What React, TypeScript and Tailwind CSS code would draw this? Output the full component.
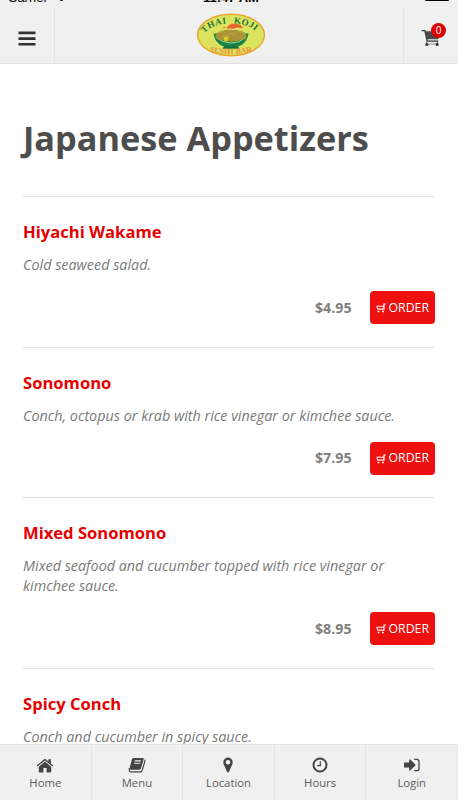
import type { ReactNode } from "react";

type Dish = {
  name: string;
  description: string;
  price: string;
};

const dishes: Dish[] = [
  { name: "Hiyachi Wakame", description: "Cold seaweed salad.", price: "$4.95" },
  {
    name: "Sonomono",
    description: "Conch, octopus or krab with rice vinegar or kimchee sauce.",
    price: "$7.95",
  },
  {
    name: "Mixed Sonomono",
    description:
      "Mixed seafood and cucumber topped with rice vinegar or kimchee sauce.",
    price: "$8.95",
  },
  {
    name: "Spicy Conch",
    description: "Conch and cucumber in spicy sauce.",
    price: "$8.95",
  },
];

function HomeIcon() {
  return (
    <svg viewBox="0 0 18 15" className="h-[15px] w-[18px]" fill="currentColor">
      <path d="M9 3.6 15.2 8.8V13.4Q15.2 14.4 14.2 14.4H10.6V10H7.4V14.4H3.8Q2.8 14.4 2.8 13.4V8.8Z" />
      <path d="M0.6 7.6 8.2 1.2Q9 .6 9.8 1.2L12.4 3.4V1.3H14.9V5.5L17.4 7.6 16.6 8.6 9 2.4 1.4 8.6Z" />
    </svg>
  );
}

function BookIcon() {
  return (
    <svg viewBox="0 0 18 16" className="h-[16px] w-[18px]">
      <path
        d="M5.6 1H14.8Q16 1 15.7 2.1L12.9 11.6Q12.6 12.7 11.5 12.7H3Q1.6 12.7 1.4 11.5L4 2.2Q4.4 1 5.6 1Z"
        fill="currentColor"
      />
      <path
        d="M6.7 3.9H12.9M6 6.3H12.2"
        stroke="#f0f0f0"
        strokeWidth="1.1"
        fill="none"
      />
      <path
        d="M1.4 11.2Q.8 14.9 3 14.9H12.4Q13.6 14.9 14 13.7L16.9 4.2Q17.1 3.4 16.4 3"
        stroke="currentColor"
        strokeWidth="1.2"
        fill="none"
      />
    </svg>
  );
}

function PinIcon() {
  return (
    <svg viewBox="0 0 10 16" className="h-[16px] w-[10px]">
      <path
        d="M5 .5A4.7 4.7 0 0 1 9.7 5.2Q9.7 6.5 9.2 7.5L6 14.7Q5 16.2 4 14.7L.8 7.5Q.3 6.5 .3 5.2A4.7 4.7 0 0 1 5 .5ZM5 2.9A2.3 2.3 0 1 0 5 7.5 2.3 2.3 0 1 0 5 2.9Z"
        fill="currentColor"
        fillRule="evenodd"
      />
    </svg>
  );
}

function ClockIcon() {
  return (
    <svg
      viewBox="0 0 16 16"
      className="size-4"
      fill="none"
      stroke="currentColor"
    >
      <circle cx="8" cy="8" r="6.5" strokeWidth="2" />
      <path d="M8.3 4.3V8.7H5.2" strokeWidth="1.2" />
    </svg>
  );
}

function LoginIcon() {
  return (
    <svg viewBox="0 0 16 14" className="h-[14px] w-[16px]">
      <path
        d="M.6 4.5H5.2V1.8Q5.4 .9 6.3 1.5L11.3 6.4Q11.8 7 11.3 7.6L6.3 12.5Q5.4 13.1 5.2 12.2V9.5H.6Q0 9.5 0 8.9V5.1Q0 4.5 .6 4.5Z"
        fill="currentColor"
      />
      <path
        d="M10.2 1.4H12.8Q15 1.4 15 3.6V10.4Q15 12.6 12.8 12.6H10.2"
        stroke="currentColor"
        strokeWidth="1.3"
        fill="none"
      />
    </svg>
  );
}

function CartIcon() {
  return (
    <svg viewBox="0 0 20 18" className="h-[18px] w-[20px]">
      <path d="M4.3 2.2H18V8.2L17 10.2H6.2Z" fill="#4a4a4a" />
      <path
        d="M.6 1.6H3.9L6.2 12.1H17.3"
        stroke="#333"
        strokeWidth="1.3"
        fill="none"
      />
      <path d="M5.6 12.6V15M16.4 12.6V15" stroke="#555" strokeWidth="1" />
      <path d="M5 15H17" stroke="#777" strokeWidth=".8" />
      <circle cx="5.9" cy="15.5" r="1.5" fill="#333" />
      <circle cx="16.1" cy="15.5" r="1.5" fill="#333" />
    </svg>
  );
}

function OrderCartIcon() {
  return (
    <svg viewBox="0 0 10 10" className="h-[10px] w-[10px]" fill="none" stroke="#fff">
      <path d="M9.8 1H8V6.2H1.4" strokeWidth="1.2" />
      <path d="M8 3.2H.8L1.5 6" strokeWidth="1" />
      <path d="M1.6 8.6H3.4M6 8.6H7.8" strokeWidth="1.5" />
    </svg>
  );
}

function Logo() {
  return (
    <svg viewBox="0 0 70 44" className="h-[44px] w-[70px]">
      <defs>
        <path id="logo-top" d="M8.5 20.5C17 7 53 7 61.5 20.5" />
        <path id="logo-bottom" d="M10 37C20 42.5 50 42.5 60 37" />
      </defs>
      <ellipse cx="35" cy="22" rx="33.4" ry="20.7" fill="#dce35f" stroke="#e9a52c" strokeWidth="1.4" />
      <path d="M17.5 20.5Q20 34.5 35 34.5T52.5 20.5Z" fill="#168347" />
      <path d="M28 33.3H42L43.5 35.8H26.5Z" fill="#13703b" />
      <path d="M20 24.5Q27 30 35 30T50 24.5" stroke="#e4e6a0" strokeWidth=".8" fill="none" />
      <ellipse cx="35" cy="22.5" rx="15.5" ry="6" fill="#a99332" />
      <path d="M22 20.5Q26 16.5 30 20.5M30 23Q34 18 39 22M39 20Q43 16.5 48 21M26 24Q30 21 34 25" stroke="#bda94c" strokeWidth="1" fill="none" />
      <circle cx="30" cy="26" r="2.3" fill="#e3cf22" />
      <path d="M30 14Q29 15 27 15M32 13.5Q34 10.5 39 11Q45 11.5 46.5 15Q42 13.3 39 15Q35 17 31 15Z" fill="#e8662a" stroke="#e8662a" strokeWidth=".8" />
      <path d="M33 16Q38 17.5 42 15" stroke="#f6d7b0" strokeWidth="1" fill="none" />
      <text className="font-['Liberation_Serif',serif] text-[9px] font-bold tracking-[.5px]" fill="#17733c">
        <textPath href="#logo-top" startOffset="0">THAI</textPath>
      </text>
      <text className="font-['Liberation_Serif',serif] text-[9px] font-bold tracking-[.4px]" fill="#17733c">
        <textPath href="#logo-top" startOffset="32">KOJI</textPath>
      </text>
      <text className="font-['Liberation_Serif',serif] text-[8px] font-bold" fill="#e98f3a">
        <textPath href="#logo-bottom" startOffset="4">SUSHI BAR</textPath>
      </text>
    </svg>
  );
}

function DishRow({ dish }: { dish: Dish }) {
  return (
    <li className="border-t border-[#dedede] pt-6 pb-[22.5px]">
      <h2 className="text-[16.6px] leading-[22px] font-bold text-[#e60000]">
        {dish.name}
      </h2>
      <p className="mt-3 text-[14.35px] leading-[20px] text-[#7a7a7a] italic">
        {dish.description}
      </p>
      <div className="mt-4 flex items-center justify-end gap-[18px]">
        <span className="text-[14.2px] font-bold text-[#808080]">
          {dish.price}
        </span>
        <button className="flex h-[33px] w-[65.5px] items-center justify-center gap-[3px] rounded-[4px] bg-[#ee0f0f] pt-px text-[12.3px] text-white">
          <OrderCartIcon />
          ORDER
        </button>
      </div>
    </li>
  );
}

const tabs: { label: string; icon: ReactNode }[] = [
  { label: "Home", icon: <HomeIcon /> },
  { label: "Menu", icon: <BookIcon /> },
  { label: "Location", icon: <PinIcon /> },
  { label: "Hours", icon: <ClockIcon /> },
  { label: "Login", icon: <LoginIcon /> },
];

export default function App() {
  return (
    <div className="flex h-[800px] w-full flex-col overflow-hidden bg-white font-['Open_Sans',sans-serif]">
      <header className="flex h-16 shrink-0 flex-col border-b border-[#e0e0e0] bg-[#f0f0f0]">
        <div className="grid h-2 shrink-0 grid-cols-3 items-start overflow-hidden px-2 font-['Liberation_Sans',sans-serif] text-[13px] leading-[14px] text-black">
          <span className="flex items-start gap-[12px]">
            <span className="-mt-[9px]">Carrier</span>
            <span className="h-px w-[3px] rounded-b-full bg-black" />
          </span>
          <span className="-mt-[9px] pl-1 text-center font-bold">11:47 AM</span>
          <span className="mr-px h-px w-6 justify-self-end rounded-b-sm bg-black" />
        </div>
        <div className="flex flex-1 items-stretch justify-between">
          <button className="flex w-[55px] items-center justify-center border-r border-[#e4e4e4] pt-[5px] text-[#333]">
            <svg viewBox="0 0 18 15" className="h-[15px] w-[18px]" fill="currentColor">
              <path d="M.5 .5h17v2.7H.5zM.5 6.2h17v2.7H.5zM.5 11.9h17v2.7H.5z" />
            </svg>
          </button>
          <div className="flex items-start pt-[5px] pl-[3px]">
            <Logo />
          </div>
          <button className="relative flex w-[55px] items-center justify-center border-l border-[#e4e4e4] pt-[5px]">
            <CartIcon />
            <span className="absolute top-[14.5px] right-[12px] flex size-[15px] items-center justify-center rounded-full bg-[#d80000] text-[10px] text-white">
              0
            </span>
          </button>
        </div>
      </header>

      <main className="min-h-0 flex-1 overflow-hidden px-[23px] pt-[50px]">
        <h1 className="pb-[34px] text-[34.3px] leading-[48px] font-bold whitespace-nowrap text-[#4d4d4d]">
          Japanese Appetizers
        </h1>
        <ul>
          {dishes.map((dish) => (
            <DishRow key={dish.name} dish={dish} />
          ))}
        </ul>
      </main>

      <nav className="grid h-[56px] shrink-0 grid-cols-5 border-t border-[#e2e2e2] bg-[#f0f0f0]">
        {tabs.map((tab) => (
          <button
            key={tab.label}
            className="flex flex-col items-center border-r border-[#e4e4e4] pt-3 text-[#444]"
          >
            <span className="flex h-4 items-center">{tab.icon}</span>
            <span className="mt-[2px] text-[11.3px] leading-[16px] text-[#5c5c5c]">
              {tab.label}
            </span>
          </button>
        ))}
      </nav>
    </div>
  );
}
